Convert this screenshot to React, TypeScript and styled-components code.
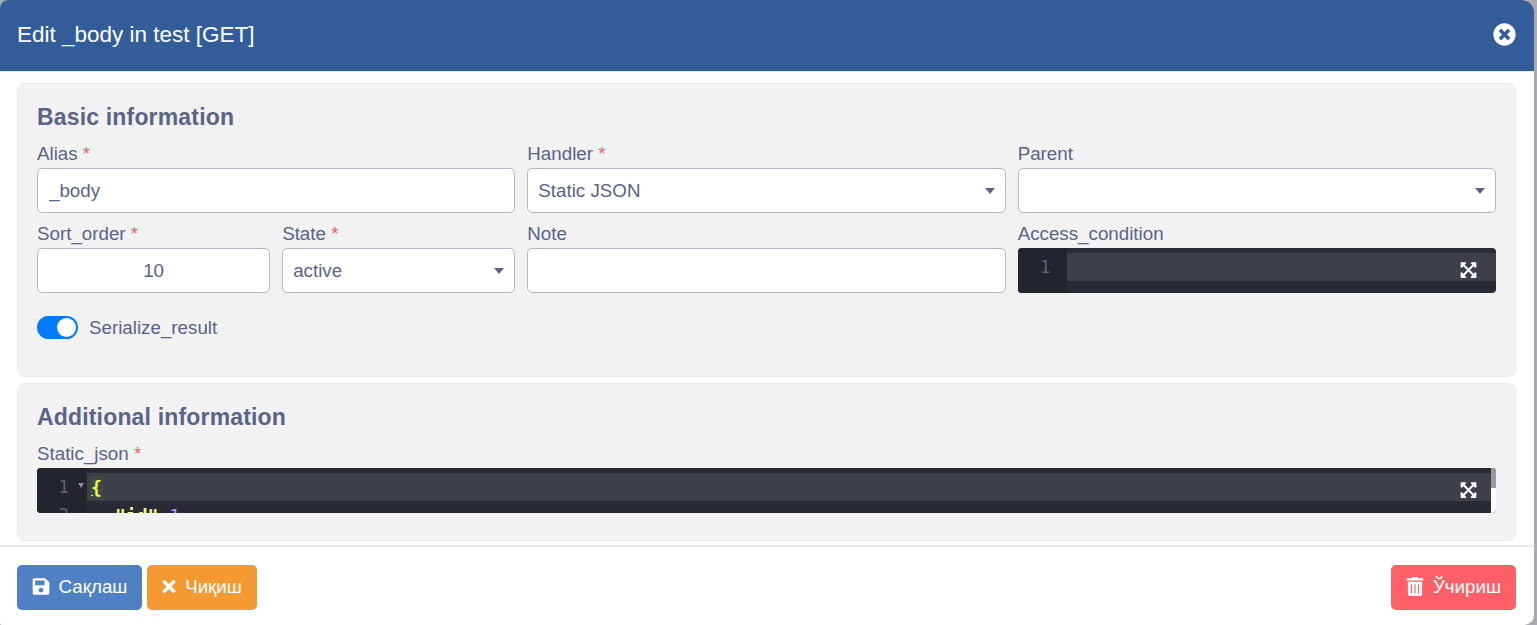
import styled, { createGlobalStyle } from "styled-components";
import { FaExpandArrowsAlt, FaSave, FaTimes, FaTimesCircle, FaTrashAlt } from "react-icons/fa";

const GlobalStyle = createGlobalStyle`
  html, body {
    margin: 0;
    height: 100%;
    overflow: hidden;
    background: #a9a9b0;
  }
  * { box-sizing: border-box; }
`;

const Modal = styled.div`
  width: 1534px;
  height: 625px;
  display: flex;
  flex-direction: column;
  background: #fff;
  border-radius: 8px 12px 10px 2px;
  overflow: hidden;
  font-family: "Liberation Sans", Arial, sans-serif;
  color: #5a6487;
`;

const Header = styled.div`
  height: 72px;
  flex: none;
  display: flex;
  align-items: center;
  justify-content: space-between;
  padding: 0 18px 2px 17px;
  background: #325d98;
  border-bottom: 1px solid #e3eaf3;
  color: #fff;
`;

const Title = styled.div`
  font-size: 22.5px;
`;

const CloseIcon = styled(FaTimesCircle)`
  width: 23px;
  height: 23px;
  color: #fff;
`;

const Body = styled.div`
  flex: none;
  height: 475px;
  padding: 11px 18px 0 17px;
  display: flex;
  flex-direction: column;
  gap: 6px;
  border-bottom: 2px solid #e6ebf2;
`;

const Panel = styled.section<{ $height: number }>`
  height: ${(p) => p.$height}px;
  flex: none;
  padding: 21px 19px 0;
  background: #f2f2f3;
  border: 1px solid #ebebec;
  border-radius: 8px;
`;

const PanelTitle = styled.h2`
  margin: 0 0 14px;
  font-size: 23px;
  line-height: 25px;
  font-weight: 700;
  letter-spacing: 0.17px;
`;

const Grid = styled.div`
  display: grid;
  grid-template-columns: repeat(3, 1fr);
  column-gap: 12px;
  row-gap: 11px;
`;

const SplitCell = styled.div`
  display: grid;
  grid-template-columns: 1fr 1fr;
  column-gap: 12px;
`;

const Field = styled.div`
  min-width: 0;
`;

const Label = styled.label`
  display: block;
  height: 24px;
  font-size: 18.75px;
  line-height: 19px;
`;

const Required = styled.span`
  color: #f2606c;
`;

const TextInput = styled.input<{ $center?: boolean }>`
  display: block;
  width: 100%;
  height: 45px;
  padding: 0 11px;
  background: #fff;
  border: 1px solid #b3b8c5;
  border-radius: 5px;
  outline: none;
  font-family: inherit;
  font-size: 18.75px;
  color: #5a6487;
  text-align: ${(p) => (p.$center ? "center" : "left")};
`;

const SelectBox = styled.div`
  height: 45px;
  padding: 0 10px;
  display: flex;
  align-items: center;
  justify-content: space-between;
  background: #fff;
  border: 1px solid #b3b8c5;
  border-radius: 5px;
  font-size: 18.75px;
`;

const Caret = styled.span`
  width: 0;
  height: 0;
  border-left: 5px solid transparent;
  border-right: 5px solid transparent;
  border-top: 6px solid #5a6487;
`;

const Editor = styled.div`
  position: relative;
  height: 45px;
  display: flex;
  overflow: hidden;
  background: #282a36;
  border-radius: 4px;
  font-family: "DejaVu Sans Mono", monospace;
  font-size: 18px;
`;

const Gutter = styled.div<{ $width: number }>`
  width: ${(p) => p.$width}px;
  flex: none;
  padding-top: 5px;
  background: #23252e;
  color: #5c636b;
`;

const GutterRow = styled.div<{ $right: number }>`
  position: relative;
  height: 28px;
  line-height: 27px;
  text-align: right;
  padding-right: ${(p) => p.$right}px;
`;

const FoldMark = styled.span`
  position: absolute;
  top: 10px;
  right: 3px;
  width: 0;
  height: 0;
  border-left: 3.5px solid transparent;
  border-right: 3.5px solid transparent;
  border-top: 5px solid #8a8d93;
`;

const Code = styled.div`
  flex: 1;
  min-width: 0;
  padding-top: 5px;
`;

const ActiveLine = styled.div`
  height: 28px;
  display: flex;
  align-items: center;
  background: #3e4049;
`;

const Brace = styled.span`
  margin-left: 3px;
  padding: 0 1px;
  height: 23px;
  line-height: 23px;
  background: #3f4a44;
  color: #f1fa4c;
  font-weight: 700;
  text-decoration: underline;
`;

const CodeLine = styled.div`
  height: 28px;
  line-height: 29px;
  padding-left: 28px;
  white-space: pre;
`;

const JsonKey = styled.span`
  color: #f1fa8c;
  font-weight: 700;
`;

const JsonPunct = styled.span`
  color: #f8f8f2;
`;

const JsonNumber = styled.span`
  color: #bd93f9;
`;

const ExpandIcon = styled(FaExpandArrowsAlt)`
  position: absolute;
  top: 13px;
  right: 18px;
  width: 19px;
  height: 18px;
  color: #fff;
`;

const ScrollTrack = styled.div`
  width: 5px;
  flex: none;
  background: linear-gradient(#9a9a9a 0 20px, #ffffff 20px);
`;

const ToggleRow = styled.div`
  display: flex;
  align-items: center;
  gap: 11px;
  margin-top: 23px;
  font-size: 18.75px;
`;

const Toggle = styled.span`
  width: 41px;
  height: 23px;
  display: flex;
  justify-content: flex-end;
  align-items: center;
  padding: 0 2px;
  background: #007bff;
  border-radius: 12px;
`;

const Knob = styled.span`
  width: 19px;
  height: 19px;
  background: #fff;
  border-radius: 50%;
`;

const Footer = styled.div`
  flex: 1;
  display: flex;
  justify-content: space-between;
  padding: 18px 18px 0 17px;
`;

const ButtonGroup = styled.div`
  display: flex;
  gap: 5px;
`;

const Button = styled.button<{ $color: string; $width: number; $tight?: boolean }>`
  width: ${(p) => p.$width}px;
  height: 45px;
  display: flex;
  align-items: center;
  justify-content: center;
  gap: ${(p) => (p.$tight ? 7 : 9)}px;
  padding: 0 ${(p) => (p.$tight ? 2 : 0)}px 2px 0;
  background: ${(p) => p.$color};
  border: none;
  border-radius: 5px;
  color: #fff;
  font-family: "Liberation Sans", Arial, sans-serif;
  font-size: 18.75px;
  svg {
    width: 18px;
    height: 19px;
  }
`;

export default function App() {
  return (
    <>
      <GlobalStyle />
      <Modal>
        <Header>
          <Title>Edit _body in test [GET]</Title>
          <CloseIcon />
        </Header>
        <Body>
          <Panel $height={294}>
            <PanelTitle>Basic information</PanelTitle>
            <Grid>
              <Field>
                <Label>Alias <Required>*</Required></Label>
                <TextInput readOnly value="_body" />
              </Field>
              <Field>
                <Label>Handler <Required>*</Required></Label>
                <SelectBox>Static JSON<Caret /></SelectBox>
              </Field>
              <Field>
                <Label>Parent</Label>
                <SelectBox><span /><Caret /></SelectBox>
              </Field>
              <SplitCell>
                <Field>
                  <Label>Sort_order <Required>*</Required></Label>
                  <TextInput readOnly $center value="10" />
                </Field>
                <Field>
                  <Label>State <Required>*</Required></Label>
                  <SelectBox>active<Caret /></SelectBox>
                </Field>
              </SplitCell>
              <Field>
                <Label>Note</Label>
                <TextInput readOnly value="" />
              </Field>
              <Field>
                <Label>Access_condition</Label>
                <Editor>
                  <Gutter $width={49}>
                    <GutterRow $right={16}>1</GutterRow>
                  </Gutter>
                  <Code>
                    <ActiveLine />
                  </Code>
                  <ExpandIcon />
                </Editor>
              </Field>
            </Grid>
            <ToggleRow>
              <Toggle><Knob /></Toggle>
              Serialize_result
            </ToggleRow>
          </Panel>
          <Panel $height={158}>
            <PanelTitle>Additional information</PanelTitle>
            <Field>
              <Label>Static_json <Required>*</Required></Label>
              <Editor>
                <Gutter $width={50}>
                  <GutterRow $right={18}>1<FoldMark /></GutterRow>
                  <GutterRow $right={18}>2</GutterRow>
                </Gutter>
                <Code>
                  <ActiveLine><Brace>{"{"}</Brace></ActiveLine>
                  <CodeLine>
                    <JsonKey>"id"</JsonKey>
                    <JsonPunct>:</JsonPunct>
                    <JsonNumber>1</JsonNumber>
                  </CodeLine>
                </Code>
                <ScrollTrack />
                <ExpandIcon />
              </Editor>
            </Field>
          </Panel>
        </Body>
        <Footer>
          <ButtonGroup>
            <Button $color="#5080c4" $width={125}><FaSave />Сақлаш</Button>
            <Button $color="#f59a32" $width={110} $tight><FaTimes />Чиқиш</Button>
          </ButtonGroup>
          <Button $color="#ff6067" $width={125}><FaTrashAlt />Ўчириш</Button>
        </Footer>
      </Modal>
    </>
  );
}
